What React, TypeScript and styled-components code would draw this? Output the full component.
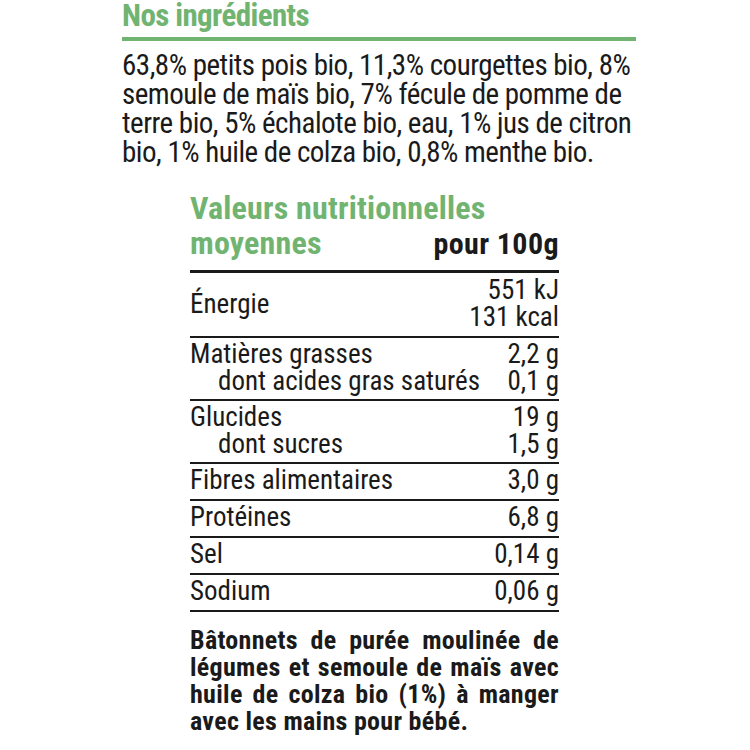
import styled, { createGlobalStyle } from 'styled-components';

const GlobalStyle = createGlobalStyle`
  html, body {
    margin: 0;
    padding: 0;
    background: #ffffff;
  }
  body {
    font-family: Roboto, "Liberation Sans", sans-serif;
    font-stretch: 75%;
    color: #1a1a1a;
  }
`;

const green = '#71b471';

const Page = styled.div`
  width: 750px;
  height: 750px;
  box-sizing: border-box;
  padding: 0 114px 0 122px;
  overflow: hidden;
`;

const Title = styled.h1`
  margin: 0;
  font-size: 31px;
  line-height: 31px;
  font-weight: 700;
  letter-spacing: -0.6px;
  color: ${green};
  border-bottom: 4px solid ${green};
  padding-bottom: 6px;
`;

const Ingredients = styled.p`
  margin: 10px 0 0;
  font-size: 29px;
  line-height: 29px;
  font-weight: 450;
  letter-spacing: -0.5px;
`;

const Nutrition = styled.section`
  width: 369px;
  margin: 24px 0 0 68px;
`;

const TableHead = styled.header`
  border-bottom: 3px solid #1a1a1a;
  padding-bottom: 9px;
`;

const TableTitle = styled.h2`
  margin: 0;
  font-size: 32px;
  line-height: 35px;
  font-weight: 700;
  letter-spacing: 0.2px;
  color: ${green};
  white-space: nowrap;
`;

const HeadRow = styled.div`
  display: flex;
  justify-content: space-between;
  align-items: baseline;
`;

const PerUnit = styled.span`
  font-size: 30px;
  line-height: 35px;
  font-weight: 700;
  letter-spacing: 0.4px;
`;

const Row = styled.div<{ $tall?: boolean; $single?: boolean }>`
  display: flex;
  justify-content: space-between;
  align-items: ${(p) => (p.$tall ? 'center' : 'flex-start')};
  border-bottom: 2.5px solid #1a1a1a;
  padding: ${(p) => (p.$tall ? '4px 0 5px' : p.$single ? '3px 0 5px' : '3px 0 4px')};
  font-size: 27px;
  line-height: 27px;
  font-weight: 450;
`;

const Labels = styled.div`
  display: flex;
  flex-direction: column;
`;

const Label = styled.span<{ $sub?: boolean }>`
  padding-left: ${(p) => (p.$sub ? '28px' : '0')};
`;

const Values = styled.div`
  display: flex;
  flex-direction: column;
  align-items: flex-end;
  text-align: right;
`;

const Description = styled.p`
  margin: 15px 0 0;
  font-size: 26px;
  line-height: 27px;
  font-weight: 700;
  letter-spacing: 0.3px;
  text-align: justify;
`;

type Line = { label: string; value: string; sub?: boolean };

const rows: Line[][] = [
  [
    { label: 'Matières grasses', value: '2,2 g' },
    { label: 'dont acides gras saturés', value: '0,1 g', sub: true },
  ],
  [
    { label: 'Glucides', value: '19 g' },
    { label: 'dont sucres', value: '1,5 g', sub: true },
  ],
  [{ label: 'Fibres alimentaires', value: '3,0 g' }],
  [{ label: 'Protéines', value: '6,8 g' }],
  [{ label: 'Sel', value: '0,14 g' }],
  [{ label: 'Sodium', value: '0,06 g' }],
];

export default function App() {
  return (
    <>
      <GlobalStyle />
      <Page>
        <Title>Nos ingrédients</Title>
        <Ingredients>
          63,8% petits pois bio, 11,3% courgettes bio, 8% semoule de maïs bio, 7% fécule de pomme de
          terre bio, 5% échalote bio, eau, 1% jus de citron bio, 1% huile de colza bio, 0,8% menthe bio.
        </Ingredients>

        <Nutrition>
          <TableHead>
            <TableTitle>Valeurs nutritionnelles</TableTitle>
            <HeadRow>
              <TableTitle>moyennes</TableTitle>
              <PerUnit>pour 100g</PerUnit>
            </HeadRow>
          </TableHead>

          <Row $tall>
            <Labels>
              <Label>Énergie</Label>
            </Labels>
            <Values>
              <span>551 kJ</span>
              <span>131 kcal</span>
            </Values>
          </Row>

          {rows.map((group) => (
            <Row key={group[0].label} $single={group.length === 1}>
              <Labels>
                {group.map((l) => (
                  <Label key={l.label} $sub={l.sub}>
                    {l.label}
                  </Label>
                ))}
              </Labels>
              <Values>
                {group.map((l) => (
                  <span key={l.label}>{l.value}</span>
                ))}
              </Values>
            </Row>
          ))}

          <Description>
            Bâtonnets de purée moulinée de légumes et semoule de maïs avec huile de colza bio (1%) à
            manger avec les mains pour bébé.
          </Description>
        </Nutrition>
      </Page>
    </>
  );
}
